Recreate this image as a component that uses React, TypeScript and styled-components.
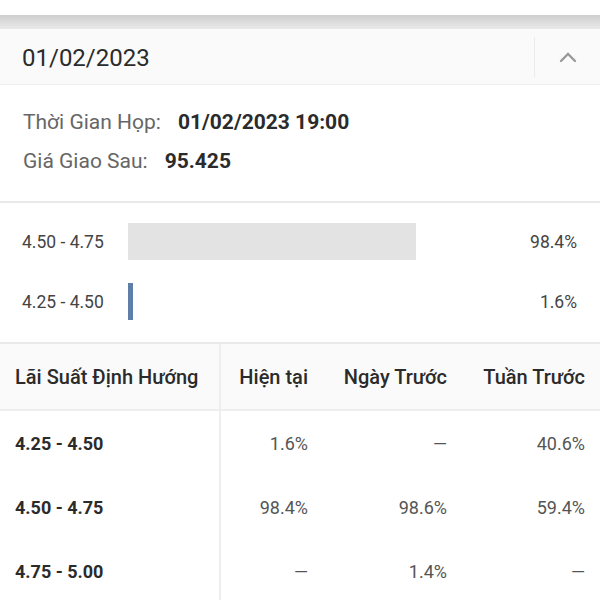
import React from "react";
import styled, { createGlobalStyle } from "styled-components";

const GlobalStyle = createGlobalStyle`
  html, body {
    margin: 0;
    padding: 0;
    background: #ffffff;
    font-family: Roboto, "Noto Sans", sans-serif;
    color: #333;
  }
`;

const Page = styled.div`
  width: 600px;
  height: 600px;
  overflow: hidden;
  background: #fff;
`;

const TopGap = styled.div`
  height: 15px;
  background: #fff;
`;

const ShadowBand = styled.div`
  height: 14px;
  background: linear-gradient(#cfcfcf, #e9e9e9);
`;

const Header = styled.div`
  height: 55px;
  display: flex;
  align-items: center;
  background: #fafafa;
  border-bottom: 1px solid #f0f0f0;
`;

const HeaderTitle = styled.div`
  flex: 1;
  padding: 2px 0 0 22px;
  font-size: 24px;
  color: #2b2b2b;
`;

const ToggleButton = styled.div`
  width: 65px;
  height: 40px;
  border-left: 1px solid #ececec;
  display: flex;
  align-items: center;
  justify-content: center;
`;

const Info = styled.div`
  padding: 25px 22px 27px 23px;
  display: flex;
  flex-direction: column;
  gap: 14px;
  border-bottom: 2px solid #e9e9e9;
`;

const InfoRow = styled.div`
  display: flex;
  align-items: baseline;
  font-size: 21px;
  line-height: 25px;
`;

const InfoLabel = styled.span`
  color: #666;
  margin-right: 17px;
`;

const InfoValue = styled.span`
  font-weight: 700;
  color: #2b2b2b;
`;

const Bars = styled.div`
  padding: 20px 23px 22px 22px;
  display: flex;
  flex-direction: column;
  gap: 23px;
  border-bottom: 2px solid #e9e9e9;
`;

const BarRow = styled.div`
  display: grid;
  grid-template-columns: 106px 293px 1fr;
  align-items: center;
  height: 37px;
  font-size: 17.5px;
  color: #444;
`;

const Track = styled.div`
  height: 37px;
  display: flex;
`;

const Fill = styled.div<{ $dominant: boolean }>`
  height: 100%;
  min-width: 4px;
  background: ${(p) => (p.$dominant ? "#e3e3e3" : "#5f7fa8")};
`;

const Pct = styled.div`
  text-align: right;
`;

const Table = styled.div`
  display: grid;
  grid-template-columns: 221px 100px 139px 1fr;
`;

const HeadCell = styled.div<{ $first?: boolean; $last?: boolean }>`
  height: 65px;
  display: flex;
  align-items: center;
  justify-content: ${(p) => (p.$first ? "flex-start" : "flex-end")};
  padding: ${(p) => (p.$first ? "0 0 0 15px" : p.$last ? "0 15px 0 0" : "0 13px 0 0")};
  background: #fafafa;
  border-bottom: 2px solid #eeeeee;
  border-right: ${(p) => (p.$first ? "2px solid #eeeeee" : "none")};
  font-size: 20px;
  font-weight: 500;
  color: #2b2b2b;
  white-space: nowrap;
`;

const Cell = styled.div<{ $first?: boolean; $last?: boolean }>`
  height: 64px;
  display: flex;
  align-items: center;
  justify-content: ${(p) => (p.$first ? "flex-start" : "flex-end")};
  padding: ${(p) => (p.$first ? "0 0 0 15px" : p.$last ? "0 15px 0 0" : "0 13px 0 0")};
  border-right: ${(p) => (p.$first ? "2px solid #eeeeee" : "none")};
  font-size: 18px;
  font-weight: ${(p) => (p.$first ? 700 : 400)};
  color: ${(p) => (p.$first ? "#2b2b2b" : "#555")};
`;

const ChevronUp = () => (
  <svg width="18" height="12" viewBox="0 0 18 12">
    <path d="M2 10 L9 3 L16 10" fill="none" stroke="#9a9a9a" strokeWidth="2.4" strokeLinecap="round" />
  </svg>
);

const bars = [
  { range: "4.50 - 4.75", pct: 98.4 },
  { range: "4.25 - 4.50", pct: 1.6 },
];

const rows = [
  ["4.25 - 4.50", "1.6%", "—", "40.6%"],
  ["4.50 - 4.75", "98.4%", "98.6%", "59.4%"],
  ["4.75 - 5.00", "—", "1.4%", "—"],
];

const App: React.FC = () => {
  return (
    <Page>
      <GlobalStyle />
      <TopGap />
      <ShadowBand />
      <Header>
        <HeaderTitle>01/02/2023</HeaderTitle>
        <ToggleButton>
          <ChevronUp />
        </ToggleButton>
      </Header>
      <Info>
        <InfoRow>
          <InfoLabel>Thời Gian Họp:</InfoLabel>
          <InfoValue>01/02/2023 19:00</InfoValue>
        </InfoRow>
        <InfoRow>
          <InfoLabel>Giá Giao Sau:</InfoLabel>
          <InfoValue>95.425</InfoValue>
        </InfoRow>
      </Info>
      <Bars>
        {bars.map((b) => (
          <BarRow key={b.range}>
            <span>{b.range}</span>
            <Track>
              <Fill $dominant={b.pct > 50} style={{ width: `${b.pct}%` }} />
            </Track>
            <Pct>{b.pct}%</Pct>
          </BarRow>
        ))}
      </Bars>
      <Table>
        <HeadCell $first>Lãi Suất Định Hướng</HeadCell>
        <HeadCell>Hiện tại</HeadCell>
        <HeadCell>Ngày Trước</HeadCell>
        <HeadCell $last>Tuần Trước</HeadCell>
        {rows.map((r) =>
          r.map((v, i) => (
            <Cell key={r[0] + i} $first={i === 0} $last={i === 3}>
              {v}
            </Cell>
          ))
        )}
      </Table>
    </Page>
  );
};

export default App;
